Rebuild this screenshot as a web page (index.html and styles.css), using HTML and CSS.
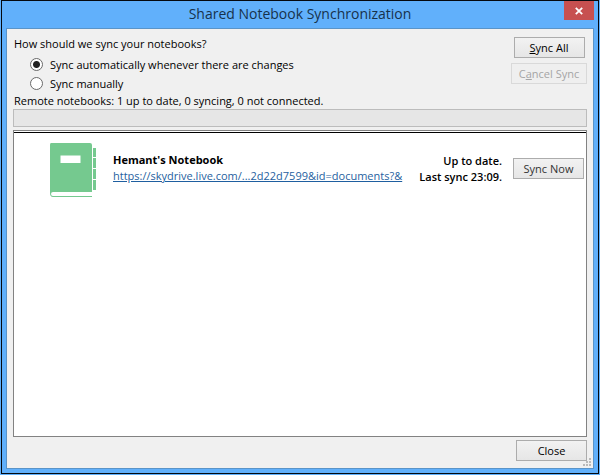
FILE: index.html
```html
<!DOCTYPE html>
<html lang="en">
<head>
<meta charset="utf-8">
<title>Shared Notebook Synchronization</title>
<link rel="stylesheet" href="styles.css">
</head>
<body>
<div class="window">
  <header class="titlebar">
    <h1 class="title">Shared Notebook Synchronization</h1>
    <button class="close-x" type="button" aria-label="Close window">
      <svg width="8" height="8" viewBox="0 0 8 8"><path d="M0.8 0.8L7.2 7.2M7.2 0.8L0.8 7.2" stroke="#fff" stroke-width="1.8"/></svg>
    </button>
  </header>
  <main class="client">
    <section class="options">
      <fieldset class="choices">
        <legend>How should we sync your notebooks?</legend>
        <label class="choice"><input type="radio" name="mode" checked>Sync automatically whenever there are changes</label>
        <label class="choice"><input type="radio" name="mode">Sync manually</label>
      </fieldset>
      <div class="actions">
        <button class="btn" type="button"><u>S</u>ync All</button>
        <button class="btn btn-off" type="button" disabled>C<u>a</u>ncel Sync</button>
      </div>
    </section>
    <p class="summary">Remote notebooks: 1 up to date, 0 syncing, 0 not connected.</p>
    <div class="progress"></div>
    <section class="list">
      <article class="notebook">
        <svg class="book" width="48" height="56" viewBox="0 0 48 56">
          <path d="M2 1H41Q43 1 43 3V50H4Q2 50 2 52T4 54H43V55H4Q1 55 1 51V3Q1 1 2 1Z" fill="#75c98f"/>
          <path d="M11.500 13.500h20v7.500h-20z" fill="#fff"/>
          <path d="M44 6h3v9h-3zM44 16h3v10h-3zM44 27h3v10h-3zM44 38h3v10h-3z" fill="#75c98f"/>
        </svg>
        <div class="details">
          <h2 class="name">Hemant's Notebook</h2>
          <a class="link" href="#">https://skydrive.live.com/...2d22d7599&amp;id=documents?&amp;</a>
        </div>
        <div class="status">Up to date.<br>Last sync 23:09.</div>
        <button class="btn btn-now" type="button">Sync Now</button>
      </article>
    </section>
    <footer class="footer">
      <button class="btn" type="button">Close</button>
      <svg class="grip" width="9" height="9" viewBox="0 0 9 9"><path d="M6 0h2v2H6zM3 3h2v2H3zM6 3h2v2H6zM0 6h2v2H0zM3 6h2v2H3zM6 6h2v2H6z" fill="#b9b9b9"/></svg>
    </footer>
  </main>
</div>
</body>
</html>
```
FILE: styles.css
```css
* { box-sizing: border-box; }

body {
  margin: 0;
  padding: 0 1px 1px;
  background: #61b0fb;
  color: #000;
  font: 500 11px/16px "Open Sans", "Noto Sans", sans-serif;
}

h1, h2, p, fieldset { margin: 0; }

.window {
  display: flex;
  flex-direction: column;
  min-height: calc(100vh - 1px);
  padding: 0 4px 4px;
  border: 1px solid #05090e;
  background: #61b0fb;
}

.titlebar {
  position: relative;
  height: 27px;
  text-align: center;
}

.title {
  color: #17324b;
  font-size: 14px;
  font-weight: 400;
  line-height: 26px;
}

.close-x {
  position: absolute;
  top: 0;
  right: 0;
  display: grid;
  place-items: center;
  width: 30px;
  height: 19px;
  padding: 0;
  border: 0;
  background: #c75050;
}

.client {
  position: relative;
  display: flex;
  flex: 1;
  flex-direction: column;
  padding: 8px 6px 7px;
  border: 1px solid #5a94c8;
  background: #f0f0f0;
}

.options {
  display: flex;
  justify-content: space-between;
}

.choices {
  padding: 0;
  border: 0;
}

legend {
  padding: 0 0 4px 1px;
  line-height: 14px;
}

.choice {
  display: flex;
  align-items: center;
  gap: 7px;
  height: 19px;
  padding-left: 17px;
}

.choice input {
  appearance: none;
  width: 13px;
  height: 13px;
  margin: 0;
  border: 1px solid #6a6a6a;
  border-radius: 50%;
  background: #fff;
}

.choice input:checked {
  background: radial-gradient(circle, #222 3px, #fff 4px);
}

.actions {
  display: flex;
  flex-direction: column;
  align-items: center;
  gap: 5px;
}

.btn {
  width: 71px;
  height: 21px;
  padding: 0;
  border: 1px solid #acacac;
  background: linear-gradient(#f2f2f2, #e6e6e6);
  color: #000;
  font: inherit;
}

.btn-off {
  width: 76px;
  border-color: #d9d9d9;
  background: #efefef;
  color: #a5a5a5;
}

.summary {
  padding: 0 0 0 1px;
}

.progress {
  height: 18px;
  border: 1px solid #bcbcbc;
  background: #e6e6e6;
}

.list {
  flex: 1;
  margin: 3px 0;
  padding-top: 1px;
  border: 1px solid #828282;
  background: #fff;
}

.notebook {
  display: flex;
  align-items: flex-start;
  padding: 9px 2px 0 35px;
  border-top: 1px solid #000;
}

.details {
  flex: 1;
  padding: 10px 0 0 16px;
}

.name {
  color: #000;
  font-size: 11px;
  font-weight: 700;
  line-height: 16px;
}

.link {
  color: #1f5fa0;
}

.status {
  padding: 11px 11px 0 0;
  color: #000;
  font-weight: 600;
  text-align: right;
}

.btn-now {
  margin-top: 16px;
  color: #333;
}

.footer {
  display: flex;
  justify-content: flex-end;
}

.grip {
  position: absolute;
  right: 1px;
  bottom: 1px;
}
```
